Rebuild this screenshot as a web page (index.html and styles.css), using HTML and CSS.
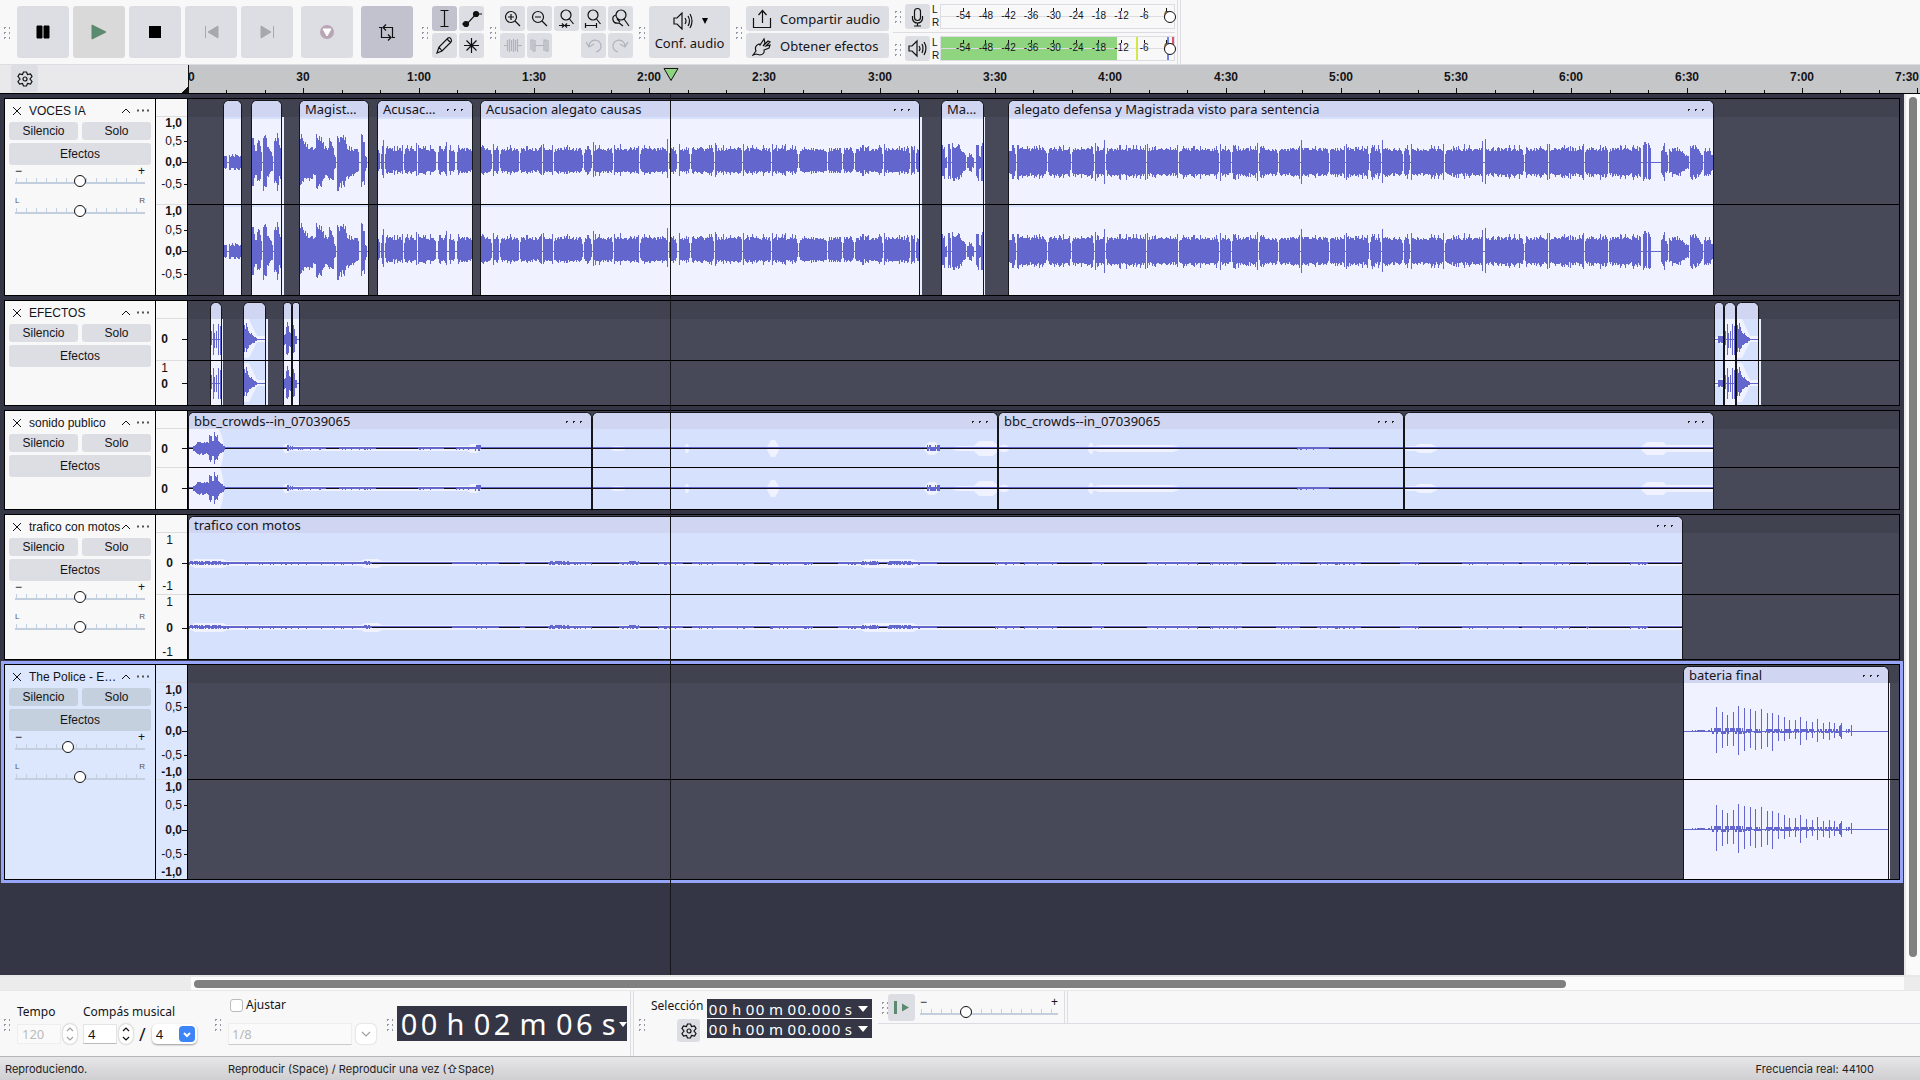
FILE: index.html
```html
<!DOCTYPE html>
<html lang="es">
  <head>
    <meta charset="utf-8">
    <title>Editor de audio</title>
    <meta name="viewport" content="width=device-width, initial-scale=1.0">
    <link rel="stylesheet" href="styles.css">
  </head>
  <body>
    <!-- top toolbars -->
    <header class="toolbar">
      <span class="grip"></span>
      <div class="transport">
        <button class="btn big" aria-label="Pausa"><svg width="52" height="52"><path d="M20 20h5v12h-5zM27 20h5v12h-5z" fill="#000" stroke="#000"/></svg></button>
        <button class="btn big playing" aria-label="Reproducir"><svg width="52" height="52"><path d="M19 19l14 7l-14 7z" fill="#5b8a6e" stroke="#5b8a6e"/></svg></button>
        <button class="btn big" aria-label="Detener"><svg width="52" height="52"><path d="M20 20h12v12h-12z"/></svg></button>
        <button class="btn big" aria-label="Ir al inicio"><svg width="52" height="52"><path d="M33 20v12l-10-6z" fill="#a5a9af" stroke="#a5a9af"/><path d="M20.500 20v12" stroke="#a5a9af"/></svg></button>
        <button class="btn big" aria-label="Ir al final"><svg width="52" height="52"><path d="M20 20v12l10-6z" fill="#a5a9af" stroke="#a5a9af"/><path d="M32.500 20v12" stroke="#a5a9af"/></svg></button>
        <button class="btn big rec" aria-label="Grabar"><svg width="52" height="52"><circle cx="26" cy="26" r="7" fill="#b9a5b4"/><path d="M22 23h8l-4 7z" fill="#fff" stroke="#fff"/></svg></button>
        <button class="btn big rec on" aria-label="Bucle"><svg width="52" height="52" fill="none" stroke="#111" stroke-width="1.200"><path d="M18 21.500h2.500v10h9M34 31.500h-2.500v-10h-9M27 28.500l3 3l-3 3M25 18.500l-3 3l3 3"/></svg></button>
      </div>
      <span class="grip"></span>
      <div class="tools t2">
        <button class="btn on" aria-label="Selección"><svg width="25" height="25" class="ln"><path d="M8.500 4.500h8M8.500 20.500h8M12.500 4.500v16"/></svg></button>
        <button class="btn" aria-label="Envolvente"><svg width="25" height="25" class="ln"><path d="M3 18h5l9-10h6"/><circle cx="7" cy="18" r="2.500" fill="#111"/><circle cx="17" cy="8" r="2.500" fill="#111"/></svg></button>
        <button class="btn" aria-label="Dibujar"><svg width="25" height="25" class="ln"><path d="M5 20l2-6l9-9q2-1 3 1t0 3l-9 9zM7 14l3 4M15 6l4 4"/></svg></button>
        <button class="btn" aria-label="Multiherramienta"><svg width="25" height="25" class="ln"><path d="M12.500 5v15M5 12.500h15M7.500 7.500l10 10M17.500 7.500l-10 10"/></svg></button>
      </div>
      <span class="grip"></span>
      <div class="tools t5">
        <button class="btn" aria-label="Acercar"><svg width="25" height="25" class="ln"><circle cx="11" cy="11" r="5.500"/><path d="M15 15l5 5M11 8v6M8 11h6"/></svg></button>
        <button class="btn" aria-label="Alejar"><svg width="25" height="25" class="ln"><circle cx="11" cy="11" r="5.500"/><path d="M15 15l5 5M8 11h6"/></svg></button>
        <button class="btn" aria-label="Ajustar selección"><svg width="25" height="25" class="ln"><circle cx="12" cy="9" r="5"/><path d="M15.500 13l4 5M5 19.500h11M8 17.500l2 2l-2 2M13 17.500l-2 2l2 2"/></svg></button>
        <button class="btn" aria-label="Ajustar proyecto"><svg width="25" height="25" class="ln"><circle cx="12" cy="9" r="5"/><path d="M15.500 13l4 5M5 19.500h10M4.500 17v5M15.500 17v5"/></svg></button>
        <button class="btn" aria-label="Conmutar zoom"><svg width="25" height="25" class="ln"><circle cx="13" cy="9" r="5"/><path d="M16 13l5 7M8 9q-4 1-3 5t6 3l4 3M9 13l3 3"/></svg></button>
        <button class="btn" aria-label="Recortar" disabled><svg width="25" height="25" class="ln dim"><path d="M4 12.500h3M18 12.500h4M7.500 7v11M9.500 6v13M11.500 7v11M13.500 6v13M15.500 7v11M17.500 6v13"/></svg></button>
        <button class="btn" aria-label="Silenciar" disabled><svg width="25" height="25" class="ln dim"><path d="M4 17v-10h2v11h2v-11M8.500 12.500h8M17 18v-11h2v11h2v-11"/></svg></button>
        <span></span>
        <button class="btn" aria-label="Deshacer" disabled><svg width="25" height="25" class="ln dim"><path d="M8 13a6 6 0 1 1 7 6M5 9l3 5l5-3"/></svg></button>
        <button class="btn" aria-label="Rehacer" disabled><svg width="25" height="25" class="ln dim"><path d="M17 13a6 6 0 1 0-7 6M20 9l-3 5l-5-3"/></svg></button>
      </div>
      <span class="grip"></span>
      <button class="btn setup">
        <span class="setupicon"><svg width="22" height="18" class="ln"><path d="M2 6h3l5-5v16l-5-5h-3zM13 6q2 3 0 6M16 4q3 5 0 10M18 2q4 7 0 14"/></svg><i class="down"></i></span>
        Conf. audio
      </button>
      <span class="grip"></span>
      <div class="share">
        <button class="btn wide"><svg width="20" height="20" class="ln"><path d="M1.500 9v9.500h17v-9.500M10.500 14v-12M6.500 6l4-4.500l4 4.500"/></svg>Compartir audio</button>
        <button class="btn wide"><svg width="20" height="20" class="ln"><path d="M1 19l3-4q-2-5 3-7l1 1l4-6l1 4l-2 3l5-5l2 1l-4 4l4-1l-1 3l-5 2q1 4-4 5l-4-1z"/></svg>Obtener efectos</button>
      </div>
      <div class="meters">
        <div class="meterrow">
          <span class="grip"></span>
          <button class="btn" aria-label="Micrófono"><svg width="25" height="25" class="ln"><rect x="9.500" y="4.500" width="6" height="12" rx="3"/><path d="M7.500 12v3q1 4 5 4t5-4v-3M12.500 19v3M9 22h7"/></svg></button>
          <div class="lr"><span>L</span><span>R</span></div>
          <div class="meter">
            <div class="db"></div>
            <input type="range" class="vol" value="100" aria-label="Nivel de grabación">
          </div>
        </div>
        <div class="meterrow">
          <span class="grip"></span>
          <button class="btn" aria-label="Altavoz"><svg width="25" height="25" class="ln"><path d="M4 10h3l5-5v15l-5-5h-3zM14 10q2 3 0 5M17 8q2 4 0 9M19 6q4 6 0 13"/></svg></button>
          <div class="lr"><span>L</span><span>R</span></div>
          <div class="meter live">
            <div class="level"></div><div class="level"></div>
            <div class="db"></div>
            <i class="peak"></i><i class="max"></i><i class="clipped"></i>
            <input type="range" class="vol" value="100" aria-label="Nivel de reproducción">
          </div>
        </div>
      </div>
      <span class="dline"></span>
    </header>

    <!-- time ruler -->
    <div class="rulerrow">
      <div class="corner">
        <button class="btn gear" aria-label="Opciones de línea de tiempo"><svg width="18" height="18" class="ln"><path d="M7.500 2h3l1 2.500l3-.5l1.500 2.500l-2 2.500l2 2.500l-1.500 2.500l-3-.5l-1 2.500h-3l-1-2.500l-3 .5l-1.500-2.500l2-2.500l-2-2.500l1.500-2.500l3 .5z"/><circle cx="9" cy="9" r="2"/></svg></button>
      </div>
      <div class="ruler" id="ruler"></div>
    </div>

    <!-- tracks -->
    <main class="main">
      <div class="tracks" id="tracks"></div>
      <div class="vscroll"><i></i></div>
    </main>
    <div class="hscroll"><i></i></div>

    <!-- bottom toolbars -->
    <section class="bottombar">
      <span class="grip"></span>
      <div class="field tempo">
        <label for="tempo">Tempo</label>
        <div class="row"><input id="tempo" type="text" value="120" disabled><span class="step off"><svg width="14" height="20" class="ln"><path d="M4 7l3-3l3 3M4 13l3 3l3-3"/></svg></span></div>
      </div>
      <div class="field compas">
        <label for="compas">Compás musical</label>
        <div class="row"><input id="compas" type="text" value="4"><span class="step"><svg width="14" height="20" class="ln"><path d="M4 7l3-3l3 3M4 13l3 3l3-3"/></svg></span><span class="slash">/</span>
          <span class="pick"><select aria-label="Denominador"><option>4</option></select><svg width="16" height="16"><path d="M5 7l3 3l3-3" fill="none" stroke="#fff" stroke-width="2"/></svg></span></div>
      </div>
      <span class="grip"></span>
      <div class="snap">
        <label class="check"><input type="checkbox">Ajustar</label>
        <div class="row"><select class="snapsel" aria-label="Ajustar a" disabled><option>1/8</option></select><span class="snapbtn"><svg width="20" height="20" class="ln"><path d="M6 8l4 4l4-4"/></svg></span></div>
      </div>
      <span class="grip"></span>
      <div class="time bigtime"><span><b>0</b><b>0</b> h <b>0</b><b>2</b> m <b>0</b><b>6</b> s</span><i class="down"></i></div>
      <span class="dline"></span>
      <span class="grip"></span>
      <div class="selname">
        <span>Selección</span>
        <button class="btn selgear" aria-label="Opciones de selección"><svg width="18" height="18" class="ln"><path d="M7.500 2h3l1 2.500l3-.5l1.500 2.500l-2 2.500l2 2.500l-1.500 2.500l-3-.5l-1 2.500h-3l-1-2.500l-3 .5l-1.500-2.500l2-2.500l-2-2.500l1.500-2.500l3 .5z"/><circle cx="9" cy="9" r="2"/></svg></button>
      </div>
      <div class="seltimes">
        <div class="time"><span><b>0</b><b>0</b> h <b>0</b><b>0</b> m <b>0</b><b>0</b>.<b>0</b><b>0</b><b>0</b> s</span><i class="down"></i></div>
        <div class="time"><span><b>0</b><b>0</b> h <b>0</b><b>0</b> m <b>0</b><b>0</b>.<b>0</b><b>0</b><b>0</b> s</span><i class="down"></i></div>
      </div>
      <div class="speedbar">
        <span class="grip"></span>
        <button class="btn speed" aria-label="Reproducir a velocidad"><svg width="27" height="27"><path d="M6 7h3v13h-3zM14 9.500l7 4l-7 4z" fill="#5b8a6e"/></svg></button>
        <div class="slide"><div class="ends"><span>−</span><span>+</span></div><input type="range" class="range" value="32" aria-label="Velocidad"></div>
        <span class="dline"></span>
      </div>
    </section>

    <footer class="status">
      <span class="st0">Reproduciendo.</span>
      <span class="st1">Reproducir (Space) / Reproducir una vez (⇧Space)</span>
      <span>Frecuencia real: 44100</span>
    </footer>
    <script src="script.js"></script>
  </body>
</html>
```
FILE: styles.css
```css
*{box-sizing:border-box;margin:0;padding:0;}
:root{--ui:"Noto Sans","Open Sans",sans-serif;--helv:"Liberation Sans",Arial,sans-serif;
  --btn:#dddee4;--bar:#f8f8f8;--line:#dcdce2;--blue:#6366cc;--dark:#343645;}
body{height:100vh;display:flex;flex-direction:column;overflow:hidden;background:var(--bar);
  font-family:var(--ui);font-size:12px;color:#141418;}
button,input,select{font-family:inherit;font-size:inherit;color:inherit;border:none;outline:none;}
svg{display:block;flex:none;}
.ln{fill:none;stroke:#111;stroke-width:1.2;}
.dim{stroke:#b0b2b9;}
.btn{background:var(--btn);border-radius:3px;display:flex;align-items:center;justify-content:center;}
.btn.on{background:#c1c2ce;}
.grip{flex:none;width:8px;height:14px;
  background:radial-gradient(circle,#9496a8 1px,transparent 1px) 0 0/5px 5px;}
.row{display:flex;align-items:center;}
.down{width:0;height:0;border:5px solid transparent;border-top:6px solid #000;border-bottom:0;}
.dline{flex:none;align-self:stretch;width:4px;border:1px solid var(--line);border-top:0;border-bottom:0;}

/* top toolbar */
.toolbar{height:64px;flex:none;display:flex;align-items:center;gap:4px;padding-left:2px;background:var(--bar);}
.transport{display:flex;gap:4px;margin:0 3px;}
.big{width:52px;height:52px;}
.playing{background:#d9d9d9;}
.rec{margin-left:4px;}
.tools{display:grid;gap:2px;}
.tools .btn{width:25px;height:25px;}
.t2{grid-template-columns:repeat(2,25px);}
.t5{grid-template-columns:repeat(5,25px);}
.setup{width:81px;height:52px;flex-direction:column;gap:4px;font-size:13px;line-height:18px;}
.setupicon{display:flex;align-items:center;gap:8px;}
.setupicon .down{border-width:6px 3px 0;}
.share{display:grid;gap:2px;}
.wide{width:143px;height:25px;justify-content:flex-start;gap:8px;padding-left:6px;font-size:13px;}
.meters{align-self:stretch;display:flex;flex-direction:column;width:282px;}
.meterrow{height:32px;display:flex;align-items:center;gap:2px;}
.meterrow + .meterrow{border-top:1px solid var(--line);}
.meterrow .btn{width:25px;height:25px;margin-left:2px;}
.lr{display:flex;flex-direction:column;font:10px/13px var(--helv);width:6px;}
.meter{position:relative;width:235px;height:25px;border:1px solid var(--line);
  background:linear-gradient(var(--line),var(--line)) 0 11px/100% 1px no-repeat;display:flex;flex-direction:column;gap:1px;}
.level{width:176px;height:11px;background:#8fd47f;}
.db{position:absolute;left:11px;top:3px;width:226px;display:grid;grid-template-columns:repeat(10,1fr);
  font:10px/12px var(--helv);text-align:center;}
.db span{background:linear-gradient(#111,#111) 50% 0/1px 3px no-repeat;padding-top:2px;}
.vol{position:absolute;right:-2px;top:6px;width:237px;height:12px;appearance:none;background:none;}
.vol::-webkit-slider-thumb,.range::-webkit-slider-thumb{appearance:none;width:12px;height:12px;border-radius:50%;
  background:#fff;border:1px solid #111;}
.peak,.max,.clipped{position:absolute;top:0;bottom:0;width:2px;}
.peak{left:195px;background:#d3e64a;}
.max{left:226px;background:#6f86e8;}
.clipped{right:0;bottom:14px;background:#d9536f;}
.toolbar > .dline{margin-left:-2px;}

/* ruler */
.rulerrow{height:30px;flex:none;display:flex;border-top:1px solid var(--line);border-bottom:1px solid #000;}
.corner{width:188px;flex:none;padding-left:11px;
  background:linear-gradient(135deg,transparent 50%,#111 50%) 100% 100%/7px 7px no-repeat #e9e9eb;}
.gear{width:27px;height:27px;}
.ruler{position:relative;flex:1;background:#c5c6c7;border-left:1px solid #111;overflow:hidden;font:bold 12px/24px var(--helv);}
.ruler span{position:absolute;top:0;transform:translateX(-50%);}
.ruler span.first{transform:none;}
.ruler span.last{left:auto;right:1px;transform:none;}
.ruler i{position:absolute;bottom:0;width:1px;height:3px;background:#111;}
.ruler i.major{height:5px;}
.ruler svg{position:absolute;top:3px;transform:translateX(-50%);}

/* tracks */
.main{flex:1;display:flex;min-height:0;}
.tracks{position:relative;flex:1;min-width:0;background:var(--dark);padding:4px;display:flex;flex-direction:column;gap:4px;overflow:hidden;}
.track{flex:none;display:flex;border:1px solid #000;background:var(--bar);}
.track.sel{background:#dce6fd;box-shadow:0 0 0 3px #97a5f8;}
.panel{width:151px;flex:none;border-right:1px solid #000;padding:4px;font-family:var(--helv);}
.title{height:16px;display:flex;align-items:center;}
.title .ln{stroke-width:1;}
.title p{flex:1;white-space:nowrap;padding-left:4px;}
.pair{display:grid;grid-template-columns:1fr 1fr;gap:4px;margin:3px 0;}
.panel .btn{width:100%;height:18px;}
.panel .fx{height:22px;}
.sel .btn{background:#c4d0dd;}
.slide{padding:0 6px;font-family:var(--helv);}
.slide .ends{display:flex;justify-content:space-between;font-size:12px;line-height:12px;height:10px;}
.slide .small{font-size:8px;margin-top:8px;color:#555;}
.range{display:block;width:100%;height:12px;appearance:none;
  background:linear-gradient(#c3cfde,#c3cfde) 0 7px/100% 2px no-repeat,
  repeating-linear-gradient(to right,transparent 0 1px,#c3cfde 1px 2px,transparent 2px 10px) 0 3px/100% 4px no-repeat;}
.scale{position:relative;width:32px;flex:none;border-right:1px solid #000;font:12px/14px var(--helv);
  background:linear-gradient(#ddd,#ddd) 0 17px/100% 1px no-repeat;}
.scale span{position:absolute;right:5px;transform:translateY(-50%);}
.scale.mid span{right:14px;}
.scale.far span{right:19px;}
.scale .zero{font-weight:bold;}
.scale i{position:absolute;right:0;width:3px;height:1px;background:#111;}
.scale i.long{width:5px;}
.scale u{position:absolute;left:0;right:0;height:1px;background:#ddd;}
.lane{position:relative;flex:1;min-width:0;background:linear-gradient(#40424f 18px,#474959 18px);}
.chline{position:absolute;left:0;right:0;height:1px;background:#000;}
.clip{position:absolute;top:1px;bottom:0;border:1px solid #16161a;border-bottom:0;border-radius:6px 6px 0 0;background:#d6e2fd;}
.clip svg{position:absolute;left:0;top:-2px;width:100%;height:calc(100% + 2px);}
.cliphead{position:relative;height:16px;background:#d0d5f2;border-radius:5px 5px 0 0;display:flex;align-items:center;
  font-size:13px;line-height:16px;white-space:nowrap;z-index:1;}
.cliphead span{padding-left:5px;}
.dots{width:21px;height:3px;margin:0 7px 0 auto;background:radial-gradient(circle,#222 1px,transparent 1px) 0 0/7px 3px;}
.tail{position:absolute;left:calc(100% + 1px);top:16px;bottom:0;background:#e8effe;}
.playhead{position:absolute;top:0;bottom:0;width:1px;background:#16161a;z-index:2;}
.vscroll{width:16px;background:#fafafa;border-left:2px solid #e8e8e8;padding:3px;}
.vscroll i{display:block;width:8px;height:calc(100% - 15px);border-radius:4px;background:#808080;}
.hscroll{height:16px;flex:none;border-top:2px solid #e8e8e8;border-bottom:1px solid #e8e8e8;padding:3px 0 0 194px;
  background:linear-gradient(#ececec,#ececec) 0 0/191px 100% no-repeat,linear-gradient(#ececec,#ececec) 100% 0/16px 100% no-repeat,#fbfbfb;}
.hscroll i{display:block;width:79.5%;height:8px;border-radius:4px;background:#808080;}

/* bottom toolbar */
.bottombar{height:65px;flex:none;display:flex;align-items:center;padding-left:2px;background:var(--bar);}
.field label{display:block;line-height:16px;margin-bottom:4px;}
.field input{height:20px;padding-left:4px;background:#fff;border:1px solid #e4e4e4;border-bottom-color:#bbb;font-size:13px;}
.field input:disabled{background:#fafafa;color:#bbb;border-color:#eee;}
.tempo{width:59px;margin:0 7px;}
.tempo input{width:44px;}
.compas{width:115px;margin-right:15px;white-space:nowrap;}
.compas input{width:34px;}
.step{margin-left:2px;width:14px;height:20px;border-radius:7px;background:#fff;box-shadow:0 0 2px #999;}
.step.off svg,.snapbtn svg{opacity:.4;}
.slash{font-size:18px;line-height:20px;margin:0 6px;}
.pick{flex:none;position:relative;width:45px;height:20px;border-radius:5px;background:#fff;box-shadow:0 1px 2px #999;}
.pick select{width:100%;height:100%;appearance:none;background:none;padding-left:4px;font-size:13px;}
.pick svg{position:absolute;right:2px;top:2px;background:#3d84f7;border-radius:4px;pointer-events:none;}
.snap{align-self:stretch;width:148px;margin:0 9px 0 7px;padding-top:6px;}
.check{display:flex;align-items:center;gap:3px;line-height:16px;margin-bottom:10px;padding-left:2px;}
.check input{appearance:none;width:13px;height:13px;border:1px solid #bbb;border-radius:3px;background:#fff;}
.snapsel{width:124px;height:22px;appearance:none;padding-left:3px;color:#b8b8b8;background:#fafafa;border:1px solid #eee;border-bottom-color:#ccc;font-size:13px;opacity:1;}
.snapbtn{margin-left:4px;width:20px;height:20px;border-radius:5px;background:#fff;box-shadow:0 0 2px #bbb;}
.time{display:flex;align-items:center;justify-content:space-between;background:var(--dark);color:#fff;white-space:nowrap;
  width:165px;height:19px;padding:1px 4px 0 1px;font-size:15px;line-height:18px;}
.time b{display:inline-block;width:10px;text-align:center;font-weight:normal;}
.time .down{border-top-color:#fff;}
.bigtime{width:230px;height:35px;margin:0 3px 0 4px;padding:1px 0 0 2px;font-size:29px;line-height:34px;}
.bigtime b{width:20px;}
.bigtime .down{border-width:5px 4px 0;}
.bottombar > .dline{margin-right:3px;}
.selname{align-self:stretch;width:56px;margin-left:6px;padding-top:6px;}
.selname span{display:block;line-height:18px;margin-bottom:4px;}
.selgear{width:23px;height:23px;margin-left:26px;}
.seltimes{align-self:stretch;padding-top:8px;display:flex;flex-direction:column;gap:1px;}
.speedbar{align-self:flex-start;flex:1;height:33px;margin-left:6px;padding-left:2px;display:flex;align-items:center;border-bottom:1px solid var(--line);}
.speed{width:27px;height:27px;}
.speedbar .slide{width:148px;padding:0 5px;margin-right:1px;}

/* status bar */
.status{height:24px;flex:none;display:flex;align-items:center;border-top:1px solid #b5b5b8;padding:0 46px 0 5px;
  background:linear-gradient(#e6e6e8,#cfcfd1);font-family:Inter,Roboto,sans-serif;font-size:11px;color:#222;}
.st0{width:223px;}
.st1{flex:1;}
```
FILE: script.js
```javascript
const PPS = 3.843; // pixels per second at this zoom
const BLUE = "#6366cc", PALE = "#f0f3ff";

// small repeatable random so the waves are the same on every load
let seed = 7;
function rnd(){
  seed = (seed * 1103515245 + 12345) % 2147483648;
  return seed / 2147483648;
}

// each wave is a list of [x, up, down] columns
function speech(w, gaps, up, down){
  const out = [];
  for(let x = 0; x < w; x++){
    let near = Math.min(...gaps.map(g => Math.abs(g - x)));
    if(near < 1){ out.push([x, 0, 0]); continue; }
    let k = 0.85 + rnd() * 0.25;
    if(rnd() < 0.18) k += 0.25;
    if(near < 2) k += rnd() < 0.4 ? 0.4 : -0.3;
    out.push([x, up * k, down * (k - 0.05 + rnd() * 0.15)]);
  }
  return out;
}
function bursts(list){
  const out = [];
  list.forEach(([a, b, p, q]) => {
    for(let x = a; x < b; x++){
      let h = p + (q - p) * (x - a) / (b - a);
      out.push([x, h * (0.75 + rnd() * 0.35), h * (0.7 + rnd() * 0.35)]);
    }
  });
  return out;
}
function thin(w, ranges){
  const out = [];
  ranges.forEach(([a, b, h]) => {
    for(let x = a; x < b && x < w; x++) out.push([x, rnd() < 0.7 ? h : 0.5, rnd() < 0.6 ? h - 1 : 0]);
  });
  return out;
}
// quiet noise: runs of a slightly thicker line with breaks between
function murmur(a, b, share){
  const out = [];
  let x = a;
  while(x < b){
    const n = 3 + Math.floor(rnd() * 24), on = rnd() < share;
    for(let i = 0; i < n && x < b; i++, x++) if(on) out.push([x, 1, rnd() < 0.15 ? 1 : 0]);
  }
  return out;
}

const gapsA = [11,18,38,61,72,102,111,132,158,187,196,197,209,233,261,290,317,346,361,373,402,429,434];
const gapsB = [7,38,62,85,96,137,169,210,222,249,269,291,320,336,360,372,394,401,435,474,475,515,539,575,599];
const drums = [[32,24,21],[38,19,16],[43,16,14],[49,19,14],[54,25,23],[60,23,19],[66,22,16],[71,20,18],[77,22,17],[83,18,15],
  [88,18,19],[94,16,9],[100,14,9],[105,11,7],[111,11,7],[116,14,13],[122,10,8],[128,9,6],[133,12,10],[139,8,7],[145,9,8],[150,8,6],
  [155,5,4],[156,6,5],[157,8,7],[167,6,4]];

function drumwave(){
  return thin(170, [[7,26,1],[26,60,3],[60,100,2],[100,155,2],[162,168,2]]).concat(drums);
}
function shot(){ return [[0,14,12],[1,10,8],[2,16,12],[3,12,9],[4,8,8],[5,6,5],[6,5,5],[7,6,4],[8,4,3],[9,3,3],[10,2,3],[11,2,1],[12,1,1]]; }
function knocks(){ return [[0,8,5],[2,15,15],[3,6,8],[5,8,8],[7,15,15],[9,13,15],[10,15,16]]; }

// clips: a = start, b = end, in pixels from second 0
const tracks = [
  {name:"VOCES IA", h:198, zero:[63,152], line:105, sliders:[50,50], white:true,
    labels:[[24,"1,0",1],[42,"0,5"],[63,"0,0",1],[85,"-0,5"],[112,"1,0",1],[131,"0,5"],[152,"0,0",1],[175,"-0,5"]],
    clips:[
      {a:35,b:54,wave:bursts([[0,3,6,6],[5,17,7,7]])},
      {a:63,b:94,tail:2,wave:bursts([[0,2,24,22],[2,5,16,12],[5,9,22,18],[9,10,10,8],[11,15,28,26],[15,21,18,6],[22,25,22,24],[25,27,30,28],[27,31,18,10]])},
      {a:111,b:181,text:"Magist…",wave:bursts([[0,3,28,24],[3,16,20,13],[16,24,26,22],[24,29,16,14],[29,34,22,16],[34,36,8,3],[37,46,27,24],[46,59,17,11],[61,65,28,24],[65,67,8,4]])},
      {a:189,b:285,dots:1,text:"Acusac…",wave:speech(94,[2,6,25,39,58,59,69,70,77,78],13,9)},
      {a:292,b:732,tail:2,dots:1,text:"Acusacion alegato causas",wave:speech(438,gapsA,13,9)},
      {a:753,b:796,tail:1,text:"Ma…",wave:bursts([[0,3,18,16],[3,5,5,5],[6,9,17,17],[10,18,18,17],[18,24,15,5],[25,32,5,5],[27,30,9,9],[34,37,18,18],[37,39,6,6],[39,42,18,18]])},
      {a:820,b:1526,dots:1,text:"alegato defensa y Magistrada visto para sentencia",
        wave:speech(632,gapsB,13,12).concat(bursts([[634,638,20,18],[639,642,19,17],[652,654,14,12],[654,656,20,19],[656,659,12,6],[660,663,12,10],[663,672,14,14],[672,680,11,5],[681,690,18,14],[690,694,12,5],[695,702,14,13],[702,704,8,5]]))}
    ]},
  {name:"EFECTOS", h:106, zero:[38,82], line:59, far:"far",
    labels:[[38,"0",1],[67,"1"],[83,"0",1]],
    clips:[
      {a:22,b:34,tail:1,wave:knocks(),full:1},
      {a:55,b:78,tail:2,wave:shot(),fade:1},
      {a:95,b:104,wave:bursts([[0,2,5,5],[2,5,16,16],[5,8,8,6]]),full:1},
      {a:104,b:112,wave:bursts([[0,2,13,13],[2,4,4,4]]),full:1},
      {a:1526,b:1536,wave:bursts([[3,8,3,3]]),env:[[0,5,2],[5,9,5]]},
      {a:1536,b:1548,wave:knocks(),full:1},
      {a:1548,b:1571,tail:2,wave:shot(),fade:1}
    ]},
  {name:"sonido publico", h:100, zero:[37,77], line:56, far:"far", black:true,
    labels:[[38,"0",1],[78,"0",1]],
    clips:[
      {a:0,b:404,dots:1,text:"bbc_crowds--in_07039065",blob:1,env:[[94,292,2],[94,101,4],[278,292,4]],
        wave:bursts([[4,8,2,5],[8,20,6,6],[20,23,14,10],[23,25,7,7],[25,29,15,12],[29,36,7,1]]).concat(thin(400,[[98,100,3],[100,104,2],[286,292,3]]),murmur(104,286,.7))},
      {a:404,b:810,dots:1,env:[[18,32,2],[92,96,4],[174,186,8],[331,347,6],[360,387,2],[380,406,7]],wave:thin(400,[[334,347,3]])},
      {a:810,b:1216,dots:1,text:"bbc_crowds--in_07039065",env:[[0,10,3],[89,95,5],[94,180,3]],wave:murmur(180,330,.4)},
      {a:1216,b:1526,dots:1,env:[[0,10,2],[8,32,4],[236,264,6],[250,312,3]],wave:[]}
    ]},
  {name:"trafico con motos", h:146, zero:[48,112], line:79, sliders:[50,50], far:"mid", black:true,
    labels:[[25,"1"],[48,"0",1],[71,"-1"],[87,"1"],[113,"0",1],[137,"-1"]],
    clips:[{a:0,b:1495,dots:1,text:"trafico con motos",env:[[0,1495,2],[0,40,4],[170,195,4],[670,730,4]],
      wave:thin(1495,[[0,32,2],[175,181,2],[360,380,2],[440,450,2],[672,690,2],[698,722,2]]).concat(murmur(32,1490,.55))}]},
  {name:"The Police - E…", h:216, zero:[66,164], line:114, sliders:[40,50], sel:true,
    labels:[[25,"1,0",1],[42,"0,5"],[66,"0,0",1],[90,"-0,5"],[107,"-1,0",1],[122,"1,0",1],[140,"0,5"],[165,"0,0",1],[189,"-0,5"],[207,"-1,0",1]],
    clips:[{a:1495,b:1701,tail:1,dots:1,text:"bateria final",wave:drumwave(),full:1}]}
];

function drawclip(c, t){
  const w = c.b - c.a;
  let back = "", line = "", d = "";
  if(t.white) back += `<path fill="${PALE}" d="M0 20h${w}v${t.line-20}h-${w}zM0 ${t.line+3}h${w}v200h-${w}z"/>`;
  if(c.full) back += `<path fill="${PALE}" d="M0 18h${w}v${t.h}h-${w}z"/>`;
  if(c.blob) back += `<path fill="${PALE}" d="M0 18h30q4 8 5 19q-1 14-4 20q3 6 4 20q-1 14-4 22h-31z"/>`;
  t.zero.forEach(z => {
    (c.env || []).forEach(([a, b, h]) => {
      const k = Math.min(6, Math.floor((b - a) / 3));
      back += `<path fill="${PALE}" d="M${a} ${z-1}L${a+k} ${z-h}H${b-k}L${b} ${z-1}V${z+2}L${b-k} ${z+h+1}H${a+k}L${a} ${z+2}z"/>`;
    });
    if(c.fade) back += `<path fill="${PALE}" d="M0 ${z-20}h5l8 17h${w}v6h-${w}l-8 16h-5z"/>`;
    if(t.black) line += `<path stroke="#111" d="M0 ${z+.5}h${w}"/>`;
    line += `<path stroke="${BLUE}" d="M0 ${z+(t.black?-.5:.5)}h${w}"/>`;
    c.wave.forEach(([x, u, v]) => { d += `M${x+.5} ${Math.round(z-u)}V${Math.round(z+v)+1}`; });
  });
  return `<div class="clip" style="left:${c.a}px;width:${w}px">
    <svg>${back}${line}<path stroke="${BLUE}" d="${d}"/></svg>
    <div class="cliphead">${c.text ? `<span>${c.text}</span>` : ""}${c.dots ? '<i class="dots"></i>' : ""}</div>
    ${c.tail ? `<i class="tail" style="width:${c.tail}px"></i>` : ""}</div>`;
}

function drawtrack(t){
  const sliders = t.sliders ? `
    <div class="slide"><div class="ends"><span>−</span><span>+</span></div>
      <input type="range" class="range" value="${t.sliders[0]}" aria-label="Volumen">
      <div class="ends small"><span>L</span><span>R</span></div>
      <input type="range" class="range" value="${t.sliders[1]}" aria-label="Balance"></div>` : "";
  const scale = t.labels.map(([y, s, bold]) =>
    `<span class="${bold ? "zero" : ""}" style="top:${y}px">${s}</span>` +
    (t.far == "far" || /1/.test(s) ? "" : `<i class="${bold ? "long" : ""}" style="top:${y}px"></i>`)).join("");
  const zeros = t.far == "far" ? t.zero.map(z => `<i class="long" style="top:${z}px"></i>`).join("") : "";
  return `<section class="track ${t.sel ? "sel" : ""}" style="height:${t.h}px">
    <div class="panel">
      <div class="title">
        <svg width="16" height="16" class="ln"><path d="M4 4l8 8M12 4l-8 8"/></svg><p>${t.name}</p>
        <svg width="12" height="16" class="ln"><path d="M1 10l4-4l4 4"/></svg>
        <svg width="18" height="16"><path d="M4 7.500h2M9 7.500h2M14 7.500h2" stroke="#555" stroke-width="2"/></svg>
      </div>
      <div class="pair"><button class="btn">Silencio</button><button class="btn">Solo</button></div>
      <button class="btn fx">Efectos</button>${sliders}
    </div>
    <div class="scale ${t.far || ""}">${scale}${zeros}<u style="top:${t.line}px"></u></div>
    <div class="lane">${t.clips.map(c => drawclip(c, t)).join("")}<i class="chline" style="top:${t.line}px"></i></div>
  </section>`;
}

const head = 482;
document.getElementById("tracks").innerHTML = tracks.map(drawtrack).join("") +
  `<i class="playhead" style="left:${188 + head}px"></i>`;

let marks = "";
for(let s = 0; s <= 450; s += 10){
  const x = Math.round(s * PPS) - 1;
  const major = s % 30 == 0;
  marks += `<i class="${major ? "major" : ""}" style="left:${x}px"></i>`;
  if(major){
    const txt = s < 60 ? s : Math.floor(s / 60) + ":" + String(s % 60).padStart(2, "0");
    marks += `<span class="${s == 0 ? "first" : s == 450 ? "last" : ""}" ${s == 450 ? "" : `style="left:${x}px"`}>${txt}</span>`;
  }
}
marks += `<svg width="16" height="13" style="left:${head}px"><path d="M1 .5h14l-7 12z" fill="#8fd47f" stroke="#111"/></svg>`;
document.getElementById("ruler").innerHTML = marks;

document.querySelectorAll(".db").forEach(el => {
  el.innerHTML = [-54,-48,-42,-36,-30,-24,-18,-12,-6,0].map(n => `<span>${n}</span>`).join("");
});
```
